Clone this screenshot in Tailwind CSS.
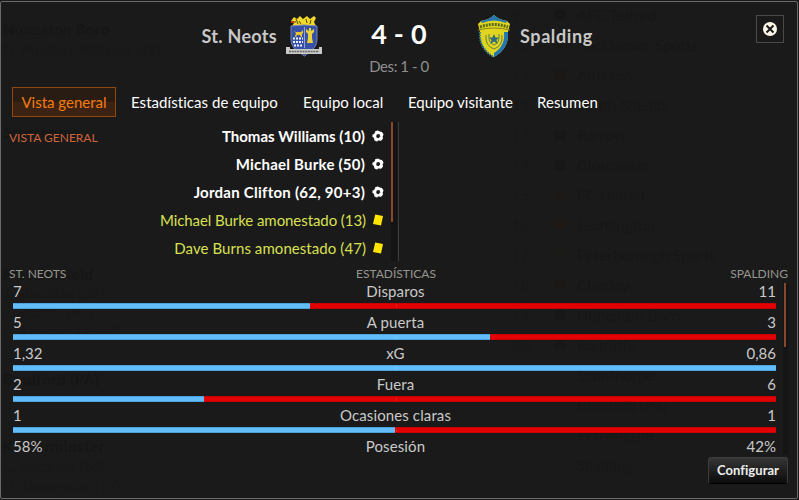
<!DOCTYPE html>
<html lang="es">
<head>
  <meta charset="UTF-8">
  <meta name="viewport" content="width=device-width, initial-scale=1.0">
  <title>St. Neots 4 - 0 Spalding</title>
  <script src="https://cdn.jsdelivr.net/npm/@tailwindcss/browser@4"></script>
</head>
<body class="bg-[#111] w-[799px] h-[500px] overflow-hidden relative font-[Lato,sans-serif] text-[15px] text-white">

  <svg class="hidden">
    <symbol id="balon" viewBox="0 0 12 12">
      <circle cx="6" cy="6" r="5.6" fill="#fff"/>
      <path fill="#1a1a1a" d="M4.6 4.400 7.300 4 8.300 6.200 6.500 8.200 4.200 7.200ZM0 4.200 1.800 4.200 3.200 2.200 2.600.4 0 0ZM6 0 7.600 1.600 9.800 1.700 10.600 0ZM12 4.800 10.600 6.300 11 8.300 12 8.500ZM5.200 12 6 10.400 8.200 10.400 9 12ZM0 7 1.700 7.500 2.400 9.800.6 10.500Z"/>
    </symbol>
    <symbol id="tarjeta" viewBox="0 0 12 12">
      <path fill="#ffe500" d="M3.200.4 11 2 9 11.600 1 10Z"/>
    </symbol>
  </svg>

  <!-- pantalla anterior, apenas visible tras la ventana -->
  <div class="absolute inset-0 bg-[#1a1a1a]"></div>
  <div class="absolute left-[577px] top-0 text-[#171717] leading-[30px] tracking-[0.15px]">
    <p>AFC Telford</p><p>Mickleover Sports</p><p>Alfreton</p><p>South Shields</p><p>Barrow</p><p>Gloucester</p><p>FC United</p><p>Leamington</p>
    <p>Peterborough Sports</p><p>Chorley</p><p>Nuneaton Boro</p><p>Radcliffe</p><p>Scunthorpe</p><p>Bradford (PA)</p><p>Warrington</p><p>Spalding</p>
  </div>
  <div class="absolute left-[554px] top-[10px] flex flex-col gap-[20px]">
    <i class="w-3 h-[10px] rounded-full bg-[#161616]"></i><i class="w-3 h-[10px] rounded-full bg-[#1b1818]"></i><i class="w-3 h-[10px] rounded-full bg-[#1b1717]"></i><i class="w-3 h-[10px] rounded-full bg-[#191919]"></i>
    <i class="w-3 h-[10px] bg-[#171717]"></i><i class="w-3 h-[10px] rounded-full bg-[#171717]"></i><i class="w-3 h-[10px] rounded-full bg-[#1b1817]"></i><i class="w-3 h-[10px] rounded-full bg-[#1c1917]"></i>
    <i class="w-3 h-[10px] rounded-full bg-[#191917]"></i><i class="w-3 h-[10px] rounded-full bg-[#1c1717]"></i><i class="w-3 h-[10px] rounded-full bg-[#171717]"></i><i class="w-3 h-[10px] rounded-full bg-[#171717]"></i>
  </div>
  <div class="absolute left-[512px] top-0 text-[#181818] leading-[30px]">
    <p>9</p><p>10</p><p>11</p><p>12</p><p>13</p><p>14</p><p>15</p><p>16</p><p>17</p><p>18</p><p>19</p><p>20</p>
  </div>
  <div class="absolute left-[3px] top-[19px] text-[#161616] leading-5">
    <p class="font-bold tracking-[0.3px]">Nuneaton Boro</p><p class="text-[#181818]">N. Preston-Watkins (49)</p>
  </div>
  <div class="absolute left-[3px] top-[122px] text-[#161616] leading-5"><p class="font-bold">Scunthorpe</p></div>
  <div class="absolute left-[3px] top-[265px] text-[#161616] leading-[19px]">
    <p class="font-bold tracking-[0.6px]">Macclesfield</p><p class="text-[#181818]">J. Sheridan (29)</p><p class="text-[#181818]">J. Beattie (42)</p><p class="text-[#181818]">H. Holman (45+2)</p>
  </div>
  <div class="absolute left-[3px] top-[369px] text-[#161616] leading-5"><p class="font-bold tracking-[0.5px]">Bradford (PA)</p></div>
  <div class="absolute left-[3px] top-[436px] text-[#161616] leading-5">
    <p class="font-bold tracking-[0.5px]">Kidderminster</p><p class="text-[#181818]">C. Yeganeh (56)</p><p class="text-[#181818]">H. Thompson (77)</p>
  </div>

  <div class="relative w-[798px] h-[498px] mt-px border border-[#6a6a6a] rounded-[2px] flex flex-col">

    <header class="h-[85px] shrink-0 grid grid-cols-[322px_150px_1fr] text-[#c8c8c8]">
      <div class="flex items-start justify-end pt-[13px] gap-[8px]">
        <span class="text-[18px] leading-[42px] font-bold tracking-[0.3px]">St. Neots</span>
        <svg class="w-[38px] h-[42px]" viewBox="0 0 38 42">
          <path d="M6 6 9 2 12 4 15 1 18 4 22 1 25 4 29 1 31 3 29 7 31 11 7 11 9 8Z" fill="#f2d829"/>
          <path d="M6 7h5M14 6l2 3M21 4l1 4M26 5l-1 4M11 4l2 5" stroke="#574509" fill="none"/>
          <path d="M6 7h3" stroke="#c33a1c" stroke-width="2"/>
          <path d="M6 11 19 10 32 11V24C32 34 24 37 19.500 41 14 37 6 34 6 24Z" fill="#3851a8" stroke="#7584b4"/>
          <path d="M9 16l2 1h5l2-2v3l-1 1v3h-1l-1-2h-3l-1 2h-1l1-4Z" fill="#e7c82b"/>
          <path d="M24 13h2v3l3-2v3l-2 2v4l1 5H22l1-5v-4l-2-2v-3l3 2Z" fill="#ead23d"/>
          <path d="M8 23.500h10M8 27h10M9 30.500h9" stroke="#eef1fa" stroke-width="2" stroke-dasharray="2 1"/>
          <path d="M19.500 12V33" stroke="#92a2cf"/>
          <path d="M1 32H5V34H34V32H37V39H1Z" fill="#c9c9c7"/>
          <path d="M4 36.500H34" stroke="#666" stroke-width="1.500" stroke-dasharray="2 .7"/>
        </svg>
      </div>
      <div class="flex flex-col items-center pt-[14px]">
        <span class="text-[27px] leading-9 font-bold text-white whitespace-pre tracking-[0.2px] pl-[2px]">4 - 0</span>
        <span class="mt-[4px] leading-[20px] text-[#8e8e8e] tracking-[-0.45px] pl-[2px]">Des: 1 - 0</span>
      </div>
      <div class="relative flex items-start pt-[12px] gap-[8px] pl-[3px]">
        <svg class="w-[36px] h-[44px]" viewBox="0 0 36 44">
          <path d="M18 1C14 5 9 6 5 7L2 10 4 18C3 30 9 38 18 43 27 38 33 30 32 18L34 10 31 7C27 6 22 5 18 1Z" fill="#e2d51e"/>
          <path d="M18 1C14 5 9 6 5 7L6 9Q18 4 30 9L31 7C27 6 22 5 18 1ZM32 18C33 30 27 38 18 43V39C26 34 29 27 28 18Z" fill="#2376b4"/>
          <path d="M4 18C3 30 9 38 18 43" fill="none" stroke="#2d85a0" stroke-width="2" stroke-dasharray="1.500 1"/>
          <path d="M4 13Q18 8 32 13" fill="none" stroke="#586c1c" stroke-width="3" stroke-dasharray="2 1"/>
          <path d="M2 16Q18 12 34 16" fill="none" stroke="#87861d"/>
          <path d="M10 21Q9 32 18 35 27 32 26 21M13 20Q12 29 18 31 24 29 23 20" fill="none" stroke="#5f8250"/>
          <path d="M18 20l1.500 3.500h3.500l-2.500 2.500 1 4-3.500-2.500-3.500 2.500 1-4-2.500-2.500h3.500Z" fill="#2f6c7a"/>
        </svg>
        <span class="text-[18px] leading-[44px] font-bold tracking-[0.6px]">Spalding</span>
        <button class="absolute right-[13px] top-[13px] size-[28px] border border-[#4a4a4a] flex items-center justify-center">
          <svg class="size-[14px]" viewBox="0 0 14 14"><circle cx="7" cy="7" r="7" fill="#fff8ea"/><path d="M3.500 3.500 10.500 10.500M10.500 3.500 3.500 10.500" stroke="#1a1a1a" stroke-width="2"/></svg>
        </button>
      </div>
    </header>

    <nav class="flex h-[30px] shrink-0 pl-[11px] leading-[30px] whitespace-nowrap">
      <a class="w-[104px] h-[30px] border border-[#8f480f] bg-linear-to-b from-[#291d13] from-50% to-[#3b2212] to-50% text-[#f57c10] text-center leading-[28px]">Vista general</a>
      <a class="ml-[15px] w-[172px] tracking-[0.05px]">Estadísticas de equipo</a>
      <a class="w-[105px] tracking-[0.05px]">Equipo local</a>
      <a class="w-[129px]">Equipo visitante</a>
      <a class="tracking-[0.1px]">Resumen</a>
    </nav>

    <section class="flex h-[144px] shrink-0 pt-[5px] pl-[8px]">
      <h2 class="w-[100px] pt-[7px] text-[12px] leading-[18px] text-[#d0643a]">VISTA GENERAL</h2>
      <ul class="w-[275px] leading-[28px] font-bold">
        <li class="flex items-center justify-end gap-[7px]">Thomas Williams (10)<svg class="size-[12px]"><use href="#balon"/></svg></li>
        <li class="flex items-center justify-end gap-[7px] tracking-[0.22px]">Michael Burke (50)<svg class="size-[12px]"><use href="#balon"/></svg></li>
        <li class="flex items-center justify-end gap-[7px] tracking-[0.25px]">Jordan Clifton (62, 90+3)<svg class="size-[12px]"><use href="#balon"/></svg></li>
        <li class="flex items-center justify-end gap-[6px] tracking-[-0.07px] font-normal text-[#d8e051]">Michael Burke amonestado (13)<svg class="size-[12px]"><use href="#tarjeta"/></svg></li>
        <li class="flex items-center justify-end gap-[6px] tracking-[0.07px] font-normal text-[#d8e051]">Dave Burns amonestado (47)<svg class="size-[12px]"><use href="#tarjeta"/></svg></li>
      </ul>
      <div class="ml-[7px] w-[6px] h-[139px] bg-[#141414]"><div class="w-[2px] h-[100px] bg-[#8b452a]"></div></div>
      <div class="ml-px w-px h-[139px] bg-[#3b3b3b]"></div>
    </section>

    <section class="flex flex-col">
      <div class="grid grid-cols-3 h-[20px] pl-[8px] pr-[9px] pt-[4px] text-[12px] leading-[18px] text-[#969690]">
        <span>ST. NEOTS</span><span class="text-center pr-[5px]">ESTADÍSTICAS</span><span class="text-right">SPALDING</span>
      </div>
      <div class="flex pl-[12px]">
        <div id="estadisticas" class="w-[763px] h-[178px] overflow-hidden text-[#c9c9c9]"></div>
        <div class="ml-[7px] mt-[2px] w-[6px] h-[171px] bg-[#151515]"><div class="ml-px w-[2px] h-[64px] bg-[#8b452a]"></div></div>
      </div>
    </section>

    <button class="absolute right-[9px] bottom-[14px] w-[80px] h-[27px] rounded-[3px] border border-[#3d3d3d] border-b-black bg-linear-to-b from-[#363636] to-[#0c0c0c] font-bold text-[13px] tracking-[0.05px] text-[#eee]">Configurar</button>
  </div>

  <script>
    // local, nombre, visitante, % de barra local (sin barra en la última fila visible)
    const filas = [
      ['7', 'Disparos', '11', 7 / 18 * 100],
      ['5', 'A puerta', '3', 62.5],
      ['1,32', 'xG', '0,86', 100],
      ['2', 'Fuera', '6', 25],
      ['1', 'Ocasiones claras', '1', 50],
      ['58%', 'Posesión', '42%', null]
    ];
    document.getElementById('estadisticas').innerHTML = filas.map(([l, n, v, p]) => `
      <div class="h-[31px]">
        <div class="grid grid-cols-3 h-[22px] leading-[21px]"><span>${l}</span><span class="text-center tracking-[0.12px] pl-[2px]">${n}</span><span class="text-right">${v}</span></div>
        ${p === null ? '' : `<div class="relative flex h-[6px] bg-[#e30000] border-y border-[#c90000]">
          <div class="-my-px h-[6px] bg-[#62bdfb] border-y border-[#4da2dc]" style="width:${p}%"></div>
          <div class="absolute left-[383px] top-0 w-px h-[4px] bg-white/10"></div>
        </div>`}
      </div>`).join('');
  </script>
</body>
</html>
